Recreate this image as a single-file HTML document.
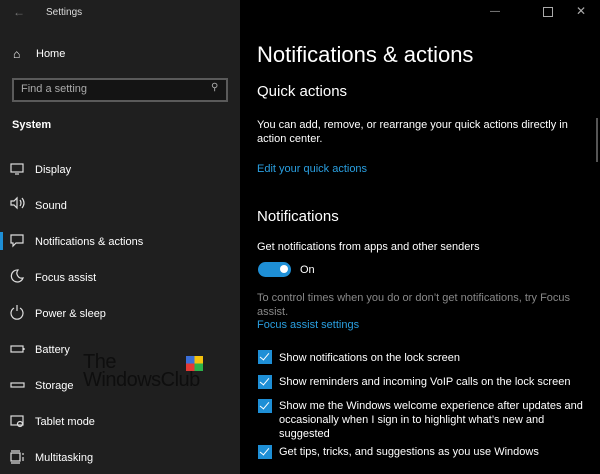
<html><head><style>
body{margin:0;width:600px;height:474px;overflow:hidden;background:#000;font-family:"Liberation Sans",sans-serif;color:#fff;position:relative}
.sb{position:absolute;left:0;top:0;width:240px;height:474px;background:#1f1f1f}
.a{position:absolute;white-space:nowrap}
.it{position:absolute;left:35px;font-size:11px;color:#fff}
.cb{position:absolute;left:258px;width:14px;height:14px;background:#1e8fd6}
.cb:after{content:"";position:absolute;left:4px;top:1px;width:4px;height:8px;border:solid #fff;border-width:0 1.5px 1.5px 0;transform:rotate(40deg)}
.ct{position:absolute;left:279px;font-size:11px;color:#fff;line-height:14px}
</style></head><body>
<div class="sb"></div>
<div class="a" style="left:13px;top:5px;font-size:12px;color:#777">←</div>
<div class="a" style="left:46px;top:7px;font-size:10px;color:#ddd">Settings</div>
<div class="a" style="left:13px;top:47px;font-size:12px">⌂</div>
<div class="a" style="left:36px;top:48px;font-size:11px">Home</div>
<div class="a" style="left:12px;top:78px;width:212px;height:20px;border:2px solid #5a5a5a;background:#141414"></div>
<div class="a" style="left:21px;top:83px;font-size:11px;color:#aaa">Find a setting</div>
<div class="a" style="left:211px;top:82px;font-size:10px;color:#aaa">⚲</div>
<div class="a" style="left:12px;top:119px;font-size:11px;font-weight:bold">System</div>
<div class="a" style="left:0;top:232px;width:3px;height:18px;background:#1e8fd6"></div>
<svg style="position:absolute;left:10px;top:162px" width="16" height="310" fill="none" stroke="#ddd" stroke-width="1.2">
<rect x="1" y="2" width="12" height="8"/><path d="M5 12h4"/>
<path d="M1 39h3l3-3v10l-3-3H1zM10 38q2 3 0 6M12 36q4 5 0 10"/>
<path d="M1 73h12v8H6l-3 3v-3H1z"/>
<path d="M8 108a6 6 0 1 0 5 8a5 5 0 0 1-5-8z"/>
<path d="M4 146a6 6 0 1 0 6 0M7 143v6"/>
<rect x="1" y="184" width="12" height="6"/><path d="M14 186v2"/>
<rect x="1" y="221" width="13" height="4"/>
<rect x="1" y="254" width="12" height="9"/><circle cx="10" cy="262" r="2.5"/>
<path d="M1 291h9v8H1zM1 289h9M1 301h9M13 291v2M13 295v4"/>
</svg>
<div class="it" style="top:164px">Display</div>
<div class="it" style="top:200px">Sound</div>
<div class="it" style="top:236px">Notifications &amp; actions</div>
<div class="it" style="top:272px">Focus assist</div>
<div class="it" style="top:308px">Power &amp; sleep</div>
<div class="it" style="top:344px">Battery</div>
<div class="it" style="top:380px">Storage</div>
<div class="it" style="top:416px">Tablet mode</div>
<div class="it" style="top:452px">Multitasking</div>
<div class="a" style="left:83px;top:353px;font-size:20px;color:#0e0e0e;line-height:18px;letter-spacing:-0.5px">The<br>WindowsClub</div>
<div class="a" style="left:186px;top:356px;width:17px;height:15px;background:conic-gradient(#f4c20d 0 25%,#2bb34a 0 50%,#e53935 0 75%,#3b6fd8 0)"></div>
<div class="a" style="left:490px;top:6px;font-size:10px;color:#aaa">—</div>
<div class="a" style="left:543px;top:7px;width:8px;height:8px;border:1px solid #aaa"></div>
<div class="a" style="left:576px;top:4px;font-size:12px;color:#aaa">✕</div>
<div class="a" style="left:596px;top:118px;width:2px;height:44px;background:#555"></div>
<div class="a" style="left:257px;top:42px;font-size:22px">Notifications &amp; actions</div>
<div class="a" style="left:257px;top:83px;font-size:15px">Quick actions</div>
<div class="a" style="left:257px;top:118px;font-size:11px;line-height:14px">You can add, remove, or rearrange your quick actions directly in<br>action center.</div>
<div class="a" style="left:257px;top:163px;font-size:11px;color:#2a9fe0">Edit your quick actions</div>
<div class="a" style="left:257px;top:208px;font-size:15px">Notifications</div>
<div class="a" style="left:257px;top:241px;font-size:11px">Get notifications from apps and other senders</div>
<div class="a" style="left:258px;top:262px;width:33px;height:15px;border-radius:8px;background:#1e8fd6"></div>
<div class="a" style="left:280px;top:265px;width:8px;height:8px;border-radius:50%;background:#fff"></div>
<div class="a" style="left:300px;top:264px;font-size:11px">On</div>
<div class="a" style="left:257px;top:291px;font-size:11px;line-height:14px;color:#888">To control times when you do or don’t get notifications, try Focus<br>assist.</div>
<div class="a" style="left:257px;top:319px;font-size:11px;color:#2a9fe0">Focus assist settings</div>
<div class="cb" style="top:350px"></div><div class="ct" style="top:351px">Show notifications on the lock screen</div>
<div class="cb" style="top:375px"></div><div class="ct" style="top:375px">Show reminders and incoming VoIP calls on the lock screen</div>
<div class="cb" style="top:399px"></div><div class="ct" style="top:399px">Show me the Windows welcome experience after updates and<br>occasionally when I sign in to highlight what’s new and<br>suggested</div>
<div class="cb" style="top:445px"></div><div class="ct" style="top:445px">Get tips, tricks, and suggestions as you use Windows</div>
</body></html>
